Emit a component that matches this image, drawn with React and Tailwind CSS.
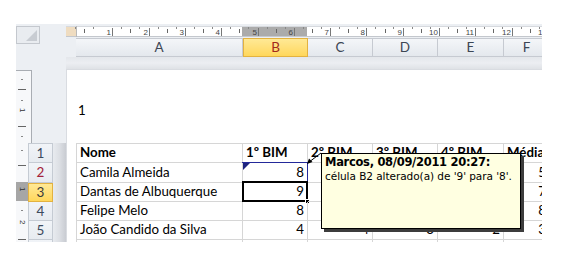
const COLS = [
  { key: 'A', w: 166 },
  { key: 'B', w: 65 },
  { key: 'C', w: 65 },
  { key: 'D', w: 65 },
  { key: 'E', w: 66 },
  { key: 'F', w: 46 },
];

const ROWS = [
  { h: 19, cells: ['Nome', '1º BIM', '2º BIM', '3º BIM', '4º BIM', 'Média'], head: true },
  { h: 20, cells: ['Camila Almeida', '8', '4', '5', '3', '5'] },
  { h: 19, cells: ['Dantas de Albuquerque', '9', '7', '6', '6', '7'] },
  { h: 19, cells: ['Felipe Melo', '8', '8', '7', '9', '8'] },
  { h: 19, cells: ['João Candido da Silva', '4', '4', '3', '2', '3'] },
  { h: 19, cells: ['', '', '', '', '', ''] },
];

function HRuler() {
  const majors = [];
  for (let k = 1; k <= 13; k++) majors.push(10 + 36.3 * k);
  return (
    <svg width="476" height="11" className="block">
      <rect x="0" y="0" width="476" height="11" fill="#ffffff" />
      <rect x="0" y="0" width="10" height="11" fill="#efdcc0" />
      <rect x="176" y="0" width="65" height="11" fill="#ababab" />
      <line x1="0" y1="0.5" x2="476" y2="0.5" stroke="#d6d9de" />
      <line x1="0" y1="10.5" x2="476" y2="10.5" stroke="#c3c7cd" />
      <line x1="10.5" y1="0" x2="10.5" y2="11" stroke="#b9b9b9" />
      {[0, ...majors].map((m, i) => (
        <g key={i}>
          {i > 0 && <line x1={Math.round(m) + 0.5} y1="2" x2={Math.round(m) + 0.5} y2="10" stroke="#777" />}
          <line x1={Math.round(m + 18.15) + 0.5} y1="3" x2={Math.round(m + 18.15) + 0.5} y2="7" stroke="#666" />
          <line x1={Math.round(m + 9) + 0.5} y1="1" x2={Math.round(m + 9) + 0.5} y2="3" stroke="#888" />
          <line x1={Math.round(m + 27) + 0.5} y1="1" x2={Math.round(m + 27) + 0.5} y2="3" stroke="#888" />
        </g>
      ))}
      {majors.map((m, i) => (
        <text
          key={'t' + i}
          x={Math.round(m) - 1}
          y="9"
          textAnchor="end"
          fontSize="8"
          fontFamily="Liberation Sans, sans-serif"
          fill="#444"
        >
          {i + 1}
        </text>
      ))}
    </svg>
  );
}

function VRulerTop() {
  return (
    <svg width="16" height="73" className="block">
      <rect x="0" y="0" width="16" height="73" fill="#f7f8fa" />
      <line x1="0" y1="0.5" x2="16" y2="0.5" stroke="#a9adb3" />
      <line x1="15.5" y1="0" x2="15.5" y2="73" stroke="#a9adb3" />
      <line x1="2" y1="19.5" x2="10" y2="19.5" stroke="#666" />
      <line x1="5" y1="9.5" x2="7" y2="9.5" stroke="#888" />
      <text x="0" y="0" fontSize="8" fontFamily="Liberation Sans, sans-serif" fill="#333" transform="translate(4 38) rotate(90)">1</text>
      <line x1="5" y1="30.5" x2="7" y2="30.5" stroke="#888" />
      <line x1="2" y1="56.5" x2="10" y2="56.5" stroke="#666" />
      <line x1="5" y1="66.5" x2="7" y2="66.5" stroke="#888" />
    </svg>
  );
}

function VRulerBottom() {
  return (
    <svg width="12" height="100" className="block">
      <rect x="0" y="0" width="12" height="100" fill="#f7f8fa" />
      <rect x="0" y="39" width="12" height="19" fill="#a6a6a6" />
      <line x1="5" y1="7.5" x2="7" y2="7.5" stroke="#888" />
      <line x1="2" y1="22.5" x2="10" y2="22.5" stroke="#666" />
      <text x="0" y="0" fontSize="8" fontFamily="Liberation Sans, sans-serif" fill="#333" transform="translate(4 44) rotate(90)">1</text>
      <line x1="5" y1="67.5" x2="7" y2="67.5" stroke="#888" />
      <text x="0" y="0" fontSize="8" fontFamily="Liberation Sans, sans-serif" fill="#333" transform="translate(4 77) rotate(90)">2</text>
      <line x1="2" y1="96.5" x2="10" y2="96.5" stroke="#666" />
    </svg>
  );
}

export default function App() {
  return (
    <div className="w-[564px] h-[257px] bg-white pt-[24px] pl-[16px] overflow-hidden relative">
      <div className="w-[526px] h-[218px] bg-[#eceff3] flex flex-col overflow-hidden">
        {/* top band */}
        <div className="flex h-[45px] shrink-0">
          <div className="w-[50px] shrink-0 pt-[2px]">
            <div className="w-[24px] h-[18px] bg-[#e9ecf0] border border-[#c4c8ce] relative">
              <svg width="22" height="16" className="absolute left-0 top-0">
                <polygon points="20,3 20,14 9,14" fill="#c8ccd2" />
              </svg>
            </div>
          </div>
          <div className="flex-1 min-w-0 overflow-hidden flex flex-col pt-[2px]">
            <div className="h-[11px]">
              <HRuler />
            </div>
            <div className="h-[1px]" />
            <div className="h-[19px] flex pl-[10px] font-['Lato',sans-serif] text-[13.5px] leading-[17px] text-[#3c4654]">
              {COLS.map((c) => (
                <div
                  key={c.key}
                  style={{ width: c.key === 'A' ? 167 : c.w }}
                  className={
                    c.key === 'B'
                      ? 'shrink-0 flex items-center justify-center bg-gradient-to-b from-[#ffe995] to-[#ffd75a] border border-[#e3b240] text-[#a12a1c]'
                      : 'shrink-0 flex items-center justify-center bg-gradient-to-b from-[#f4f6f9] to-[#e4e8ed] border-r border-y border-[#c6cad1]'
                  }
                >
                  {c.key}
                </div>
              ))}
            </div>
            <div className="h-[12px] bg-gradient-to-b from-[#e4e7eb] via-[#eceef2] to-[#dfe2e6]" />
          </div>
        </div>

        {/* body */}
        <div className="flex flex-1 min-h-0">
          {/* left side: vertical ruler + row headers */}
          <div className="w-[50px] shrink-0 flex flex-col pt-[1px]">
            <div className="h-[73px] flex">
              <VRulerTop />
            </div>
            <div className="flex">
              <div className="w-[12px] shrink-0">
                <VRulerBottom />
              </div>
              <div className="w-[25px] shrink-0 flex flex-col border-t border-[#c5cbd3] font-['Lato',sans-serif] text-[13.5px] leading-[17px]">
                {ROWS.map((r, i) => {
                  const n = i + 1;
                  const sel = n === 3;
                  return (
                    <div
                      key={i}
                      style={{ height: r.h }}
                      className={
                        sel
                          ? 'flex items-center justify-center bg-gradient-to-b from-[#ffe995] to-[#ffd75a] border border-[#e3b240] text-[#3b3b3b]'
                          : 'flex items-center justify-center bg-gradient-to-b from-[#f1f4f8] to-[#e7ebf0] border-x border-b border-[#c5cbd3] ' +
                            (n === 2 ? 'text-[#a3213a]' : 'text-[#3c4a5e]')
                      }
                    >
                      {n <= 5 ? n : ''}
                    </div>
                  );
                })}
              </div>
              <div className="flex-1 bg-gradient-to-r from-[#e8ebef] via-[#dcdfe4] to-[#c9ccd2]" />
            </div>
          </div>

          {/* page */}
          <div className="flex-1 min-w-0 overflow-hidden bg-white flex flex-col border-t border-l border-[#d9dce1] font-['Lato',sans-serif] text-[13.3px] leading-[17px] text-black">
            <div className="h-[73px] shrink-0 pl-[11px] pt-[32px]">1</div>
            <div className="ml-[9px] border-l border-t border-[#d6d6d6] flex flex-col">
              {ROWS.map((r, ri) => (
                <div key={ri} className="flex" style={{ height: r.h }}>
                  {COLS.map((c, ci) => {
                    const isB2 = ri === 1 && ci === 1;
                    const isB3 = ri === 2 && ci === 1;
                    return (
                      <div
                        key={c.key}
                        style={{ width: c.w }}
                        className={
                          'shrink-0 border-r border-b border-[#d6d6d6] flex items-end pb-[1px] relative whitespace-nowrap overflow-visible ' +
                          (r.head ? 'font-bold pl-[3px] ' : ci === 0 ? 'pl-[3px] ' : 'justify-end pr-[3px] ')
                        }
                      >
                        {r.cells[ci]}
                        {isB2 && (
                          <>
                            <div className="absolute left-[-1px] top-[-1px] right-[-1px] h-[1px] bg-[#23299a]" />
                            <div className="absolute right-[-1px] top-[-1px] bottom-0 w-[1px] bg-[#23299a]" />
                            <svg width="8" height="8" className="absolute left-0 top-0">
                              <polygon points="0,0 7,0 0,7" fill="#1d237f" />
                            </svg>
                          </>
                        )}
                        {isB3 && (
                          <>
                            <div className="absolute left-[-1px] top-[-2px] right-[-1px] bottom-[-1px] border-2 border-black" />
                            <div className="absolute right-[-3px] bottom-[-3px] w-[5px] h-[5px] bg-black border border-white" />
                          </>
                        )}
                      </div>
                    );
                  })}
                </div>
              ))}
            </div>
          </div>
        </div>
      </div>

      {/* comment arrow */}
      <svg width="30" height="20" className="absolute left-[302px] top-[148px]">
        <line x1="19" y1="5" x2="6.5" y2="14.5" stroke="#000" strokeWidth="1" />
        <polygon points="5,16 7,10.5 10.5,14" fill="#000" />
      </svg>

      {/* comment box */}
      <div className="absolute left-[321px] top-[153px] w-[200px] h-[76px] bg-[#ffffe1] border border-black shadow-[3px_3px_0_0_#3d3d3d] pl-[3px] pt-[1px] font-['DejaVu_Sans',sans-serif] text-[#000]">
        <div className="font-bold text-[11.5px] leading-[14px] tracking-[-0.3px]">Marcos, 08/09/2011 20:27:</div>
        <div className="text-[10.5px] leading-[14px] tracking-[-0.05px]">célula B2 alterado(a) de '9' para '8'.</div>
      </div>
    </div>
  );
}
